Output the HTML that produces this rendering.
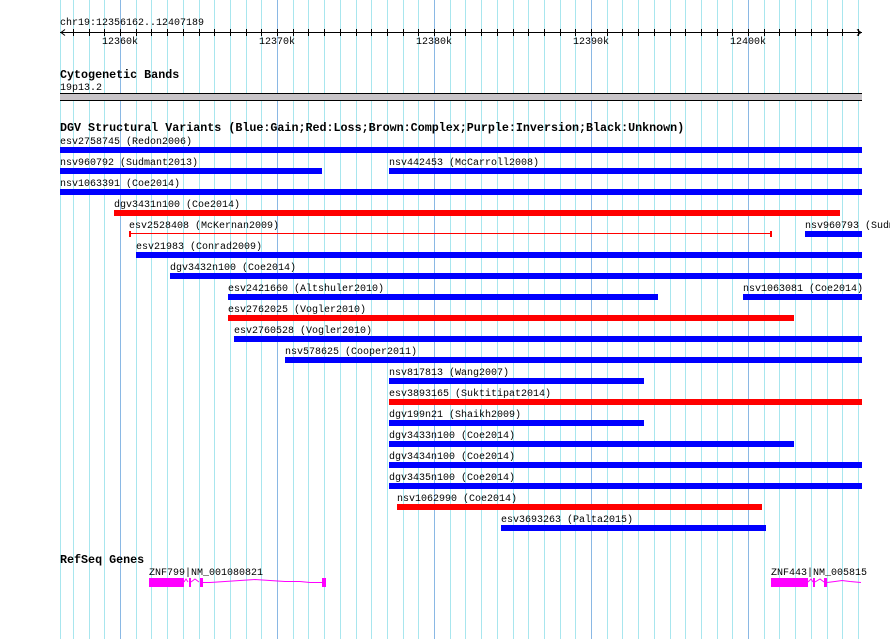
<!DOCTYPE html>
<html><head><meta charset="utf-8"><style>
html,body{margin:0;padding:0;background:#fff;width:890px;height:639px;overflow:hidden}
svg{display:block}
text{font-family:"Liberation Mono","DejaVu Sans Mono",monospace;font-size:10px;fill:#000}
.b{font-weight:bold;font-size:11.7px}
</style></head><body>
<svg width="890" height="639" xmlns="http://www.w3.org/2000/svg">
<path stroke="#a8e6ee" stroke-width="1" fill="none" d="M60.5 0V639M73.5 0V639M89.5 0V639M104.5 0V639M136.5 0V639M151.5 0V639M167.5 0V639M183.5 0V639M199.5 0V639M214.5 0V639M230.5 0V639M246.5 0V639M261.5 0V639M293.5 0V639M308.5 0V639M324.5 0V639M340.5 0V639M356.5 0V639M371.5 0V639M387.5 0V639M403.5 0V639M418.5 0V639M450.5 0V639M465.5 0V639M481.5 0V639M497.5 0V639M513.5 0V639M528.5 0V639M544.5 0V639M560.5 0V639M575.5 0V639M607.5 0V639M622.5 0V639M638.5 0V639M654.5 0V639M670.5 0V639M685.5 0V639M701.5 0V639M717.5 0V639M732.5 0V639M764.5 0V639M779.5 0V639M795.5 0V639M811.5 0V639M827.5 0V639M842.5 0V639M858.5 0V639"/>
<path stroke="#8ab8e4" stroke-width="1" fill="none" d="M120.5 0V639M277.5 0V639M434.5 0V639M591.5 0V639M748.5 0V639"/>
<!-- ruler -->
<path stroke="#000" stroke-width="1" fill="none" d="M73.5 29V36M89.5 29V36M104.5 29V36M120.5 29V36M136.5 29V36M151.5 29V36M167.5 29V36M183.5 29V36M199.5 29V36M214.5 29V36M230.5 29V36M246.5 29V36M261.5 29V36M277.5 29V36M293.5 29V36M308.5 29V36M324.5 29V36M340.5 29V36M356.5 29V36M371.5 29V36M387.5 29V36M403.5 29V36M418.5 29V36M434.5 29V36M450.5 29V36M465.5 29V36M481.5 29V36M497.5 29V36M513.5 29V36M528.5 29V36M544.5 29V36M560.5 29V36M575.5 29V36M591.5 29V36M607.5 29V36M622.5 29V36M638.5 29V36M654.5 29V36M670.5 29V36M685.5 29V36M701.5 29V36M717.5 29V36M732.5 29V36M748.5 29V36M764.5 29V36M779.5 29V36M795.5 29V36M811.5 29V36M827.5 29V36M842.5 29V36M858.5 29V36"/>
<text x="60" y="25">chr19:12356162..12407189</text>
<line x1="60" y1="32.5" x2="862" y2="32.5" stroke="#000"/>
<polyline points="65,29.5 61,32.5 65,35.5" fill="none" stroke="#000"/>
<polyline points="857,29.5 861,32.5 857,35.5" fill="none" stroke="#000"/>
<text x="102" y="44">12360k</text>
<text x="259" y="44">12370k</text>
<text x="416" y="44">12380k</text>
<text x="573" y="44">12390k</text>
<text x="730" y="44">12400k</text>
<!-- cytobands -->
<text class="b" x="60" y="78">Cytogenetic Bands</text>
<text x="60" y="90">19p13.2</text>
<rect x="60" y="93" width="802" height="8" fill="#000"/>
<rect x="60" y="94" width="802" height="6" fill="#c8c4c8"/>
<!-- DGV -->
<text class="b" x="60" y="131">DGV Structural Variants (Blue:Gain;Red:Loss;Brown:Complex;Purple:Inversion;Black:Unknown)</text>
<text x="60" y="144">esv2758745 (Redon2006)</text><rect x="60" y="147" width="802" height="6" fill="#00f"/>
<text x="60" y="165">nsv960792 (Sudmant2013)</text><rect x="60" y="168" width="262" height="6" fill="#00f"/>
<text x="389" y="165">nsv442453 (McCarroll2008)</text><rect x="389" y="168" width="473" height="6" fill="#00f"/>
<text x="60" y="186">nsv1063391 (Coe2014)</text><rect x="60" y="189" width="802" height="6" fill="#00f"/>
<text x="114" y="207">dgv3431n100 (Coe2014)</text><rect x="114" y="210" width="726" height="6" fill="#f00"/>
<text x="129" y="228">esv2528408 (McKernan2009)</text>
<line x1="129" y1="233.5" x2="771" y2="233.5" stroke="#f00"/>
<rect x="129" y="231" width="2" height="6" fill="#f00"/><rect x="770" y="231" width="2" height="6" fill="#f00"/>
<text x="805" y="228">nsv960793 (Sudmant2013)</text><rect x="805" y="231" width="57" height="6" fill="#00f"/>
<text x="136" y="249">esv21983 (Conrad2009)</text><rect x="136" y="252" width="726" height="6" fill="#00f"/>
<text x="170" y="270">dgv3432n100 (Coe2014)</text><rect x="170" y="273" width="692" height="6" fill="#00f"/>
<text x="228" y="291">esv2421660 (Altshuler2010)</text><rect x="228" y="294" width="430" height="6" fill="#00f"/>
<text x="743" y="291">nsv1063081 (Coe2014)</text><rect x="743" y="294" width="119" height="6" fill="#00f"/>
<text x="228" y="312">esv2762025 (Vogler2010)</text><rect x="228" y="315" width="566" height="6" fill="#f00"/>
<text x="234" y="333">esv2760528 (Vogler2010)</text><rect x="234" y="336" width="628" height="6" fill="#00f"/>
<text x="285" y="354">nsv578625 (Cooper2011)</text><rect x="285" y="357" width="577" height="6" fill="#00f"/>
<text x="389" y="375">nsv817813 (Wang2007)</text><rect x="389" y="378" width="255" height="6" fill="#00f"/>
<text x="389" y="396">esv3893165 (Suktitipat2014)</text><rect x="389" y="399" width="473" height="6" fill="#f00"/>
<text x="389" y="417">dgv199n21 (Shaikh2009)</text><rect x="389" y="420" width="255" height="6" fill="#00f"/>
<text x="389" y="438">dgv3433n100 (Coe2014)</text><rect x="389" y="441" width="405" height="6" fill="#00f"/>
<text x="389" y="459">dgv3434n100 (Coe2014)</text><rect x="389" y="462" width="473" height="6" fill="#00f"/>
<text x="389" y="480">dgv3435n100 (Coe2014)</text><rect x="389" y="483" width="473" height="6" fill="#00f"/>
<text x="397" y="501">nsv1062990 (Coe2014)</text><rect x="397" y="504" width="365" height="6" fill="#f00"/>
<text x="501" y="522">esv3693263 (Palta2015)</text><rect x="501" y="525" width="265" height="6" fill="#00f"/>
<!-- RefSeq -->
<text class="b" x="60" y="563">RefSeq Genes</text>
<text x="149" y="575">ZNF799|NM_001080821</text>
<rect x="149" y="578" width="35" height="9" fill="#f0f"/>
<polyline points="184,582 186,579 188,582" fill="none" stroke="#f0f"/>
<rect x="189" y="578" width="2" height="9" fill="#f0f"/>
<polyline points="191,582 195,579 199,582" fill="none" stroke="#f0f"/>
<rect x="200" y="578" width="3" height="9" fill="#f0f"/>
<polyline points="203,582.5 210,582.5 225,581.5 240,580.5 255,579.5 270,580.5 285,581.5 300,581.5 310,582.5 322,582.5" fill="none" stroke="#f0f"/>
<rect x="322" y="578" width="4" height="9" fill="#f0f"/>
<text x="771" y="575">ZNF443|NM_005815</text>
<rect x="771" y="578" width="37" height="9" fill="#f0f"/>
<polyline points="808,582 811,579 813,582" fill="none" stroke="#f0f"/>
<rect x="813" y="578" width="2" height="9" fill="#f0f"/>
<polyline points="815,582 820,579 824,582" fill="none" stroke="#f0f"/>
<rect x="824" y="578" width="3" height="9" fill="#f0f"/>
<polyline points="827,582.5 835,581.5 842,580.5 850,581.5 861,582.5" fill="none" stroke="#f0f"/>
</svg>
</body></html>
